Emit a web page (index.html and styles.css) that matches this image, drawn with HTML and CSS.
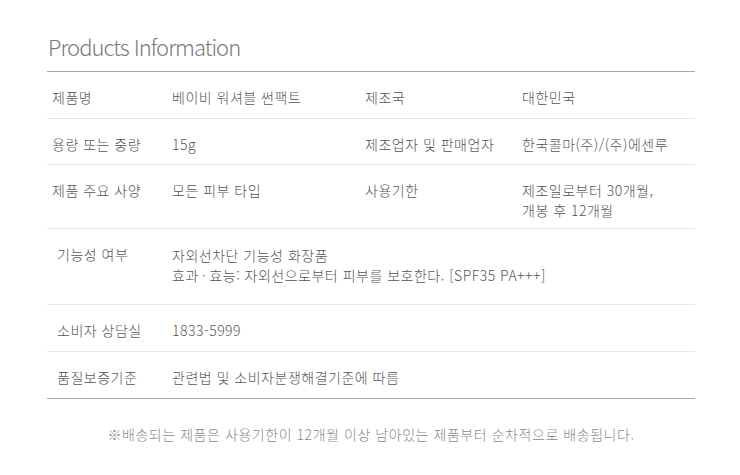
FILE: index.html
```html
<!DOCTYPE html>
<html lang="ko">
<head>
<meta charset="utf-8">
<title>Products Information</title>
<link rel="stylesheet" href="styles.css">
</head>
<body>
<section class="info">
  <h2 class="title">Products Information</h2>
  <table class="spec">
    <colgroup>
      <col class="c1"><col class="c2"><col class="c3"><col class="c4">
    </colgroup>
    <tbody>
      <tr class="r1">
        <th>제품명</th><td>베이비 워셔블 썬팩트</td>
        <th class="sub">제조국</th><td>대한민국</td>
      </tr>
      <tr class="r2">
        <th>용량 또는 중량</th><td>15g</td>
        <th class="sub">제조업자 및 판매업자</th><td>한국콜마(주)/(주)에센루</td>
      </tr>
      <tr class="r3">
        <th>제품 주요 사양</th><td>모든 피부 타입</td>
        <th class="sub">사용기한</th><td>제조일로부터 30개월,<br>개봉 후 12개월</td>
      </tr>
      <tr class="r4 wide">
        <th>기능성 여부</th><td colspan="3">자외선차단 기능성 화장품<br>효과&thinsp;·&thinsp;효능: 자외선으로부터 피부를 보호한다. [SPF35 PA+++]</td>
      </tr>
      <tr class="r5 wide">
        <th>소비자 상담실</th><td colspan="3">1833-5999</td>
      </tr>
      <tr class="r6 wide">
        <th>품질보증기준</th><td colspan="3">관련법 및 소비자분쟁해결기준에 따름</td>
      </tr>
    </tbody>
  </table>
  <p class="note">※배송되는 제품은 사용기한이 12개월 이상 남아있는 제품부터 순차적으로 배송됩니다.</p>
</section>
</body>
</html>
```

FILE: styles.css
```css
html, body {
  margin: 0;
  padding: 0;
  background: #fff;
}
body {
  font-family: "Noto Sans CJK KR", "Noto Sans", sans-serif;
  font-weight: 300;
  color: #555;
}
.info {
  width: 648px;
  margin: 0 0 0 47px;
  padding-top: 30px;
}
.title {
  margin: 0 0 0 1px;
  font-size: 22px;
  line-height: 32px;
  font-weight: 300;
  color: #7a7a7a;
  letter-spacing: -1px;
  height: 41px;
}
.spec {
  width: 648px;
  border-collapse: collapse;
  table-layout: fixed;
  border-top: 1px solid #a9a9a9;
  border-bottom: 1px solid #a9a9a9;
  font-size: 14px;
  line-height: 20px;
  letter-spacing: 0.5px;
}
.c1 { width: 125px; }
.c2 { width: 193px; }
.c3 { width: 157px; }
.c4 { width: 173px; }
.spec tr { border-top: 1px solid #e8e8e8; }
.spec tr:first-child { border-top: none; }
.spec th, .spec td {
  text-align: left;
  font-weight: 300;
  vertical-align: top;
  padding: 15px 0 0 0;
  white-space: nowrap;
}
.spec th { padding-left: 5px; }
.spec th.sub { padding-left: 0; }
.spec .wide th { padding-left: 10px; }
.r1 { height: 47px; }
.r2 { height: 46px; }
.r3 { height: 64px; }
.r4 { height: 76px; }
.r4 td { padding-top: 16px; }
.r5 { height: 47px; }
.r6 { height: 47px; }
.note {
  margin: 25px 0 0 0;
  text-align: center;
  font-size: 14px;
  line-height: 20px;
  letter-spacing: 0.55px;
  color: #8a8a8a;
}
```
